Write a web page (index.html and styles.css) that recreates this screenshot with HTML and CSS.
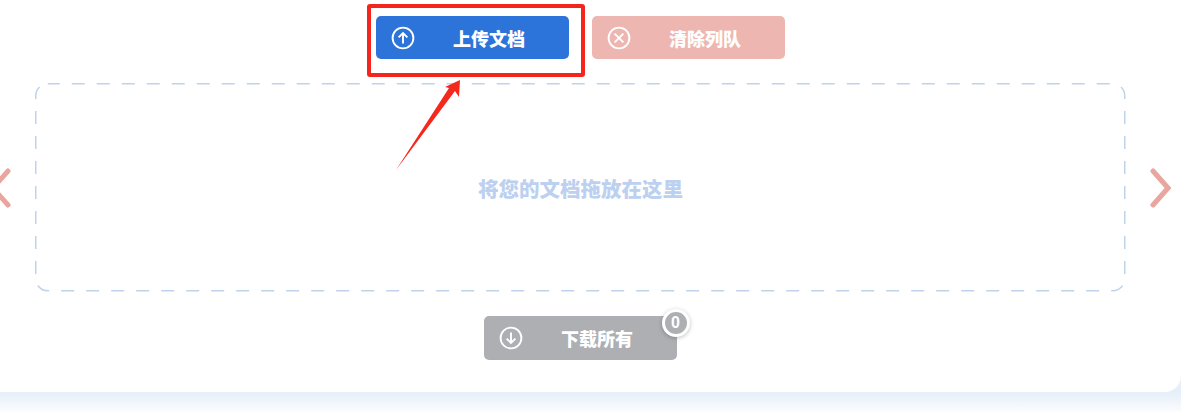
FILE: index.html
```html
<!DOCTYPE html>
<html lang="zh-CN">
<head>
<meta charset="utf-8">
<title>上传文档</title>
<link rel="stylesheet" href="styles.css">
</head>
<body>
<main class="card">
  <div class="actions">
    <button class="btn btn-blue" type="button">
      <svg class="btn-icon" viewBox="0 0 24 24"><circle cx="12" cy="12" r="10.4"/><path d="M12 17.5V7M7.6 11.4 12 7l4.4 4.4"/></svg>
      <span class="btn-label">上传文档</span>
    </button>
    <button class="btn btn-red" type="button">
      <svg class="btn-icon" viewBox="0 0 24 24"><circle cx="12" cy="12" r="10.4"/><path d="M7.6 7.6l8.8 8.8M16.4 7.6l-8.8 8.8"/></svg>
      <span class="btn-label">清除列队</span>
    </button>
  </div>
  <div class="stage">
    <svg class="chev" viewBox="0 0 21 40"><path d="M18 3 3 20l15 17"/></svg>
    <div class="drop">
      <svg class="dash" viewBox="0 0 1089 208"><rect x="-0.25" y="-0.25" width="1089" height="207" rx="12" ry="12"/></svg>
      将您的文档拖放在这里
    </div>
    <svg class="chev" viewBox="0 0 21 40"><path d="M3 3l15 17L3 37"/></svg>
  </div>
  <div class="footer">
    <button class="btn btn-grey" type="button">
      <svg class="btn-icon" viewBox="0 0 24 24"><circle cx="12" cy="12" r="10.4"/><path d="M12 6.5V17M7.6 12.6 12 17l4.4-4.4"/></svg>
      <span class="btn-label">下载所有</span>
      <span class="badge">0</span>
    </button>
  </div>
</main>
<div class="highlight"></div>
<svg class="arrow" viewBox="0 0 80 100"><path d="M1 91 54 9 50 8 65 1 64 18 60 12Z"/></svg>
</body>
</html>
```
FILE: styles.css
```css
* { box-sizing: border-box; }
html, body { margin: 0; height: 412px; overflow: hidden; }
body {
  font-family: "Noto Sans CJK SC", "Liberation Sans", sans-serif;
  position: relative;
  background: linear-gradient(#e6eef8 16px, #fbfdff 100%) 0 376px / 100% 36px no-repeat #fff;
}
.card {
  height: 392px;
  padding: 16px 20px 0 0;
  background: #fff;
  border-bottom-right-radius: 16px;
  display: flex;
  flex-direction: column;
  align-items: center;
}
.actions { display: flex; gap: 23px; margin-left: -1px; }
.btn {
  position: relative;
  width: 193px;
  height: 43px;
  padding: 0 0 0 15px;
  border: 0;
  border-radius: 5px;
  color: #fff;
  font: 900 18px/1 "Noto Sans CJK SC", sans-serif;
  display: flex;
  align-items: center;
}
.btn-blue { background: #2c74d9; }
.btn-red { background: #eeb6b0; }
.btn-grey { background: #adafb3; height: 44px; }
.btn-icon { width: 24px; height: 24px; flex: none; fill: none; stroke: #fff; stroke-width: 1.9; }
.btn-label { flex: 1; text-align: center; padding-right: 5px; }
.stage {
  align-self: flex-start;
  margin: 25px 0 0 -10px;
  display: flex;
  align-items: center;
  gap: 25px;
}
.chev { width: 21px; height: 40px; fill: none; stroke: #e8a69e; stroke-width: 5; stroke-linecap: round; stroke-linejoin: miter; }
.drop {
  position: relative;
  width: 1089px;
  height: 208px;
  color: #bcd0ef;
  font-size: 20.5px;
  font-weight: 900;
  display: flex;
  align-items: center;
  justify-content: center;
}
.dash {
  position: absolute;
  inset: 0;
  width: 100%;
  height: 100%;
  overflow: visible;
  fill: none;
  stroke: #bfd3ea;
  stroke-width: 1.5;
  stroke-dasharray: 13 12;
  stroke-dashoffset: 1;
}
.footer { margin-top: 24px; margin-left: -1px; }
.badge {
  position: absolute;
  top: -7px;
  right: -13px;
  width: 28px;
  height: 28px;
  border: 3px solid #fff;
  border-radius: 50%;
  background: #adafb3;
  box-shadow: 0 1px 4px rgba(0, 0, 0, .25);
  font: 700 16px/22px "Liberation Sans", sans-serif;
  text-align: center;
}
.highlight {
  position: absolute;
  left: 367px;
  top: 4px;
  width: 218px;
  height: 73px;
  border: 4px solid #f5241c;
  border-radius: 3px;
}
.arrow { position: absolute; left: 395px; top: 79px; width: 80px; height: 100px; fill: #f5281e; }
```
